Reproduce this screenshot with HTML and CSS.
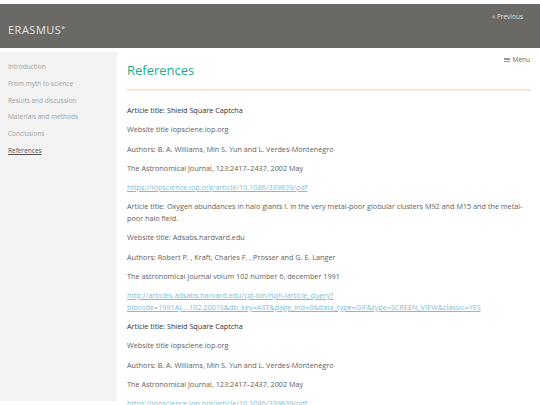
FILE: index.html
```html
<!DOCTYPE html>
<html lang="en">
<head>
    <meta charset="UTF-8">
    <title>References - ERASMUS*</title>
    <link rel="stylesheet" href="styles.css">
</head>
<body>
    <header class="site-header">
        <div class="logo">ERASMUS<sup>*</sup></div>
        <a class="prev-link" href="#">« Previous</a>
    </header>

    <div class="layout">
        <nav class="sidebar">
            <a href="#">Introduction</a>
            <a href="#">From myth to science</a>
            <a href="#">Results and discussion</a>
            <a href="#">Materials and methods</a>
            <a href="#">Conclusions</a>
            <a href="#" class="active">References</a>
        </nav>

        <main class="content">
            <button class="menu-toggle"><span class="burger"></span>Menu</button>
            <h1>References</h1>

            <p class="title">Article title: Shield Square Captcha</p>
            <p>Website title iopsciene.iop.org</p>
            <p>Authors: B. A. Williams, Min S. Yun and L. Verdes-Montenegro</p>
            <p>The Astronomical Journal, 123:2417–2437, 2002 May</p>
            <p><a href="#">https://iopscience.iop.org/article/10.1086/339839/pdf</a></p>

            <p>Article title: Oxygen abundances in halo giants I. in the very metal-poor globular clusters M92 and M15 and the metal-poor halo field.</p>
            <p>Website title: Adsabs.hardvard.edu</p>
            <p>Authors: Robert P. , Kraft, Charles F. , Prosser and G. E. Langer</p>
            <p>The astronomical journal volum 102 number 6, december 1991</p>
            <p><a href="#">http://articles.adsabs.harvard.edu/cgi-bin/nph-iarticle_query?<wbr>bibcode=1991AJ....102.2001S&amp;db_key=AST&amp;page_ind=0&amp;data_type=GIF&amp;type=SCREEN_VIEW&amp;classic=YES</a></p>

            <p class="title">Article title: Shield Square Captcha</p>
            <p>Website title iopsciene.iop.org</p>
            <p>Authors: B. A. Williams, Min S. Yun and L. Verdes-Montenegro</p>
            <p>The Astronomical Journal, 123:2417–2437, 2002 May</p>
            <p><a href="#">https://iopscience.iop.org/article/10.1086/339839/pdf</a></p>
        </main>
    </div>
</body>
</html>
```

FILE: styles.css
```css
html, body {
    height: 100%;
}

body {
    font-family: 'Open Sans', sans-serif;
    margin: 0;
    padding-top: 4px;
    background-color: #fff;
    color: #5e5e5e;
    overflow: hidden;
    box-sizing: border-box;
}

.site-header {
    background-color: #6a6966;
    height: 44px;
    display: flex;
    justify-content: space-between;
    align-items: flex-start;
    padding: 0 17px 0 8px;
}

.logo {
    color: #e4e4e2;
    font-size: 11px;
    letter-spacing: 0.5px;
    margin-top: 18px;
}

.logo sup {
    font-size: 7px;
    vertical-align: 3px;
}

.prev-link {
    color: #e0e0de;
    font-size: 6.5px;
    text-decoration: none;
    margin-top: 8px;
}

.layout {
    display: flex;
    margin-top: 4px;
    height: calc(100% - 52px);
}

.sidebar {
    width: 117px;
    flex-shrink: 0;
    background-color: #f3f3f3;
    padding-top: 11px;
    display: flex;
    flex-direction: column;
}

.sidebar a {
    color: #a0a0a0;
    font-size: 6.5px;
    line-height: 8px;
    padding: 0 8px;
    margin-bottom: 8.8px;
    text-decoration: none;
}

.sidebar a.active {
    color: #555;
    text-decoration: underline;
}

.content {
    flex: 1;
    position: relative;
    padding: 0 9px 0 10px;
}

.menu-toggle {
    position: absolute;
    top: 3px;
    right: 10px;
    background: none;
    border: none;
    padding: 0;
    font-family: inherit;
    font-size: 6.5px;
    color: #666;
    display: flex;
    align-items: center;
    gap: 3px;
}

.burger {
    width: 6px;
    height: 4px;
    border-top: 1px solid #999;
    border-bottom: 1px solid #999;
    position: relative;
    box-sizing: border-box;
}

.burger::after {
    content: "";
    position: absolute;
    left: 0;
    right: 0;
    top: 0.5px;
    border-top: 1px solid #999;
}

.content h1 {
    color: #27a98f;
    font-weight: 500;
    font-size: 13px;
    margin: 8px 0 0;
    padding-bottom: 9px;
    border-bottom: 2px solid #fae3d7;
    line-height: 20px;
}

.content p {
    font-size: 7.25px;
    line-height: 11.6px;
    margin: 0 0 7.7px;
}

.content h1 + p {
    margin-top: 14px;
}

.content p.title {
    color: #2e2e2e;
    font-weight: 500;
}

.content a {
    color: #7cc0d8;
    overflow-wrap: break-word;
}
```
